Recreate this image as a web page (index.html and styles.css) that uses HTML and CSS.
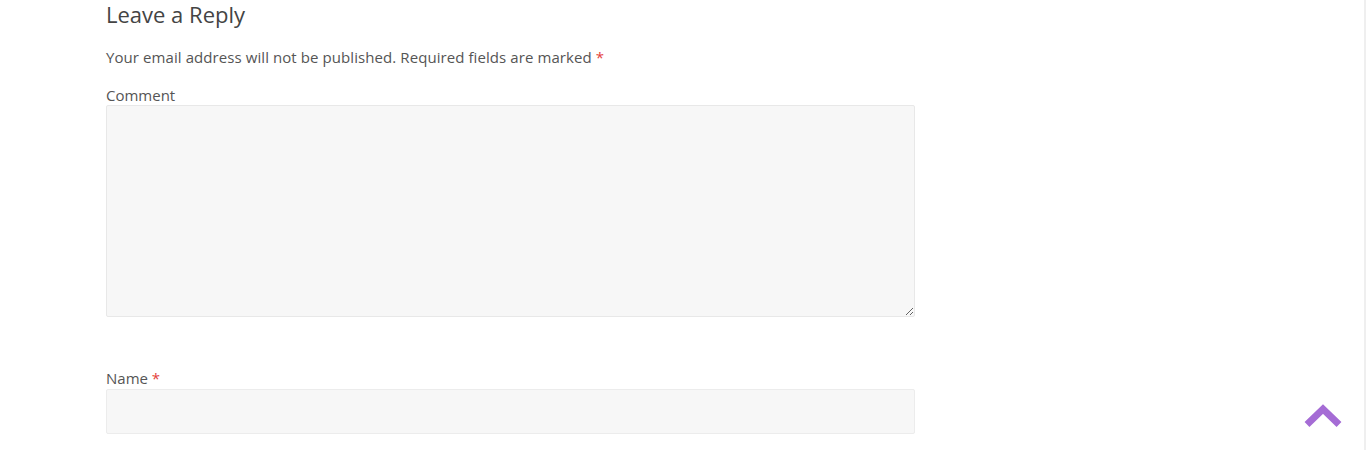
FILE: index.html
```html
<!DOCTYPE html>
<html lang="en">
<head>
<meta charset="utf-8">
<title>Leave a Reply</title>
<link rel="stylesheet" href="styles.css">
</head>
<body>
<div class="page">
  <section class="respond">
    <h3 class="reply-title">Leave a Reply</h3>
    <form class="comment-form">
      <p class="notes">Your email address will not be published. Required fields are marked <span class="req">*</span></p>
      <div class="field comment">
        <label class="label" for="comment">Comment</label>
        <textarea id="comment" class="textarea"></textarea>
      </div>
      <div class="field name">
        <label class="label" for="author">Name <span class="req">*</span></label>
        <input id="author" class="input" type="text">
      </div>
    </form>
  </section>
</div>
<a class="to-top" href="#" aria-label="Back to top">
  <svg width="38" height="24" viewBox="0 0 38 24"><path d="M3 20.5 L19 5 L35 20.5" fill="none" stroke="#a56cd5" stroke-width="7" stroke-linejoin="miter"/></svg>
</a>
<div class="edge"></div>
</body>
</html>
```

FILE: styles.css
```css
html, body {
  margin: 0;
  padding: 0;
  background: #fff;
}
body {
  font-family: "Open Sans", "Liberation Sans", sans-serif;
  color: #555;
  overflow: hidden;
  height: 450px;
}
.page {
  padding-left: 106px;
  width: 809px;
}
.reply-title {
  margin: 0;
  font-size: 22px;
  font-weight: 400;
  line-height: 28px;
  color: #444;
}
.comment-form {
  margin: 0;
}
.notes {
  margin: 14px 0 0;
  font-size: 15px;
  line-height: 30px;
  letter-spacing: 0.08px;
}
.req {
  color: #e4403c;
}
.field {
  display: flex;
  flex-direction: column;
}
.label {
  font-size: 15px;
  line-height: 20px;
}
.comment {
  margin-top: 13px;
}
.textarea {
  display: block;
  box-sizing: border-box;
  width: 809px;
  height: 212px;
  margin: 0;
  background: #f7f7f7;
  border: 1px solid #e8e8e8;
  border-radius: 2px;
  resize: vertical;
  font: inherit;
}
.name {
  margin-top: 51px;
}
.name .label {
  line-height: 21px;
}
.input {
  display: block;
  box-sizing: border-box;
  width: 809px;
  height: 45px;
  margin: 0;
  background: #f7f7f7;
  border: 1px solid #ececec;
  border-radius: 2px;
  font: inherit;
}
.to-top {
  position: fixed;
  left: 1304px;
  top: 404px;
  display: block;
  line-height: 0;
}
.edge {
  position: fixed;
  top: 0;
  right: 0;
  width: 2px;
  height: 100%;
  background: #efefef;
}
```
